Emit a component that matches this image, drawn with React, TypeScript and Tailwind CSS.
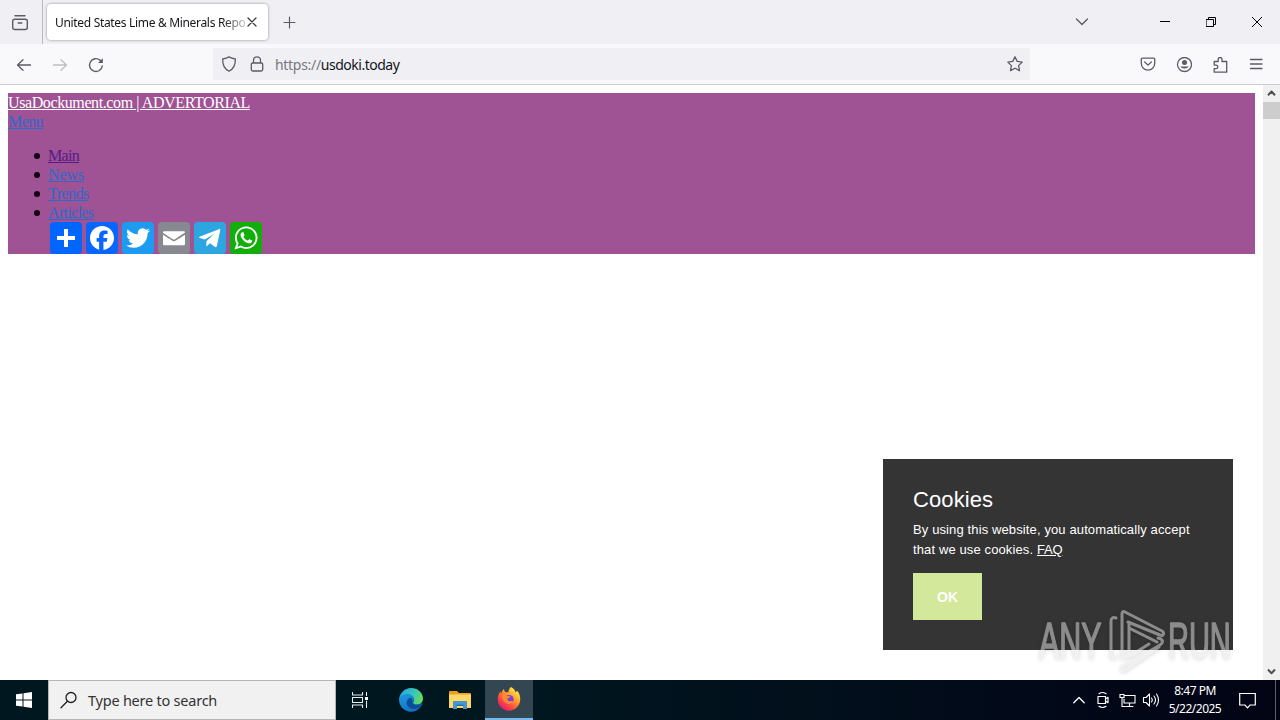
import type { ReactNode } from "react";

interface IconProps { w?: number; h?: number; sw?: number; color?: string; className?: string; children: ReactNode }

function Icon({ w = 16, h = 16, sw = 1.3, color = "#5b5b66", className = "", children }: IconProps) {
  return (
    <svg width={w} height={h} viewBox={`0 0 ${w} ${h}`} fill="none" stroke={color} strokeWidth={sw} strokeLinecap="round" strokeLinejoin="round" className={`block shrink-0 ${className}`}>
      {children}
    </svg>
  );
}

const NAV = [
  { label: "Main", color: "text-[#551a8b]", tracking: "tracking-[-0.7px]" },
  { label: "News", color: "text-[#2a6acb]", tracking: "tracking-[-0.1px]" },
  { label: "Trends", color: "text-[#2a6acb]", tracking: "tracking-[-0.55px]" },
  { label: "Articles", color: "text-[#2a6acb]", tracking: "tracking-[-0.65px]" },
];

const SHARE: { name: string; bg: string; path: string }[] = [
  { name: "share", bg: "bg-[#0166ff]", path: "M14 7h4v18h-4z M7 14h18v4H7z" },
  { name: "facebook", bg: "bg-[#0866ff]", path: "M28 16c0-6.627-5.373-12-12-12S4 9.373 4 16c0 5.628 3.875 10.35 9.101 11.647v-7.98h-2.474V16H13.1v-1.58c0-4.085 1.849-5.978 5.859-5.978.76 0 2.072.15 2.608.298v3.325c-.283-.03-.775-.045-1.386-.045-1.967 0-2.728.745-2.728 2.683V16h3.92l-.673 3.667h-3.247v8.245C23.395 27.195 28 22.135 28 16" },
  { name: "twitter", bg: "bg-[#1d9bf0]", path: "M28 8.557a10 10 0 0 1-2.828.775 4.93 4.93 0 0 0 2.166-2.725 9.7 9.7 0 0 1-3.13 1.194 4.92 4.92 0 0 0-3.593-1.55 4.924 4.924 0 0 0-4.794 6.049c-4.09-.21-7.72-2.17-10.15-5.15a4.94 4.94 0 0 0-.665 2.477c0 1.71.87 3.214 2.19 4.1a5 5 0 0 1-2.23-.616v.06c0 2.39 1.7 4.38 3.952 4.83-.414.115-.85.174-1.297.174q-.476-.001-.928-.086a4.935 4.935 0 0 0 4.6 3.42 9.9 9.9 0 0 1-6.114 2.107q-.597 0-1.175-.068a13.95 13.95 0 0 0 7.55 2.213c9.056 0 14.01-7.507 14.01-14.013q0-.32-.015-.637c.96-.695 1.795-1.56 2.455-2.55z" },
  { name: "email", bg: "bg-[#888990]", path: "M27 21.775v-9.12s-9.433 6.147-11 6.735c-1.547-.56-11-6.736-11-6.736v9.12c0 1.268.268 1.534 1.534 1.534h18.932c1.295 0 1.534-.23 1.534-1.533m-.015-11.267c0-.922-.268-1.32-1.534-1.32H6.534c-1.304 0-1.534.414-1.534 1.337l.015.145s9.293 6.397 10.985 7c1.780-.690 11-7.200 11-7.200z" },
  { name: "telegram", bg: "bg-[#2ca5e0]", path: "M25.515 6.896 6.027 14.410c-1.330.534-1.322 1.276-.243 1.606l5 1.560 9-5.400-7.400 7v5.200l3.600-3.200 5.056 3.734c.930.514 1.602.250 1.834-.863l3.320-15.638c.338-1.363-.520-1.980-1.410-1.577z" },
  { name: "whatsapp", bg: "bg-[#12af0a]", path: "M16.21 4.41C9.973 4.41 4.917 9.465 4.917 15.7c0 2.134.592 4.13 1.62 5.832L4.5 27.59l6.25-2.002a11.24 11.24 0 0 0 5.46 1.404c6.234 0 11.29-5.055 11.29-11.29 0-6.237-5.056-11.292-11.29-11.292m0 20.69c-1.91 0-3.69-.57-5.173-1.553l-3.61 1.156 1.173-3.49a9.35 9.35 0 0 1-1.79-5.512c0-5.18 4.217-9.4 9.4-9.4s9.397 4.22 9.397 9.4c0 5.188-4.214 9.4-9.398 9.4zm5.293-6.832c-.284-.155-1.673-.906-1.934-1.012-.265-.106-.455-.16-.658.12s-.78.91-.954 1.096c-.176.186-.345.203-.628.048-.282-.154-1.2-.494-2.264-1.517-.83-.795-1.373-1.76-1.53-2.055s0-.445.15-.584c.134-.124.3-.326.45-.488.15-.163.203-.28.306-.47.104-.19.06-.36-.005-.506-.066-.147-.59-1.587-.81-2.173-.218-.586-.46-.498-.63-.505-.168-.007-.358-.038-.55-.045-.19-.007-.51.054-.78.332-.277.274-1.05.943-1.1 2.362-.055 1.418.926 2.826 1.064 3.023.137.2 1.874 3.272 4.76 4.537 2.888 1.264 2.9.878 3.43.85.53-.027 1.734-.633 2-1.297s.287-1.24.22-1.363c-.07-.123-.26-.203-.54-.357z" },
];

function TabBar() {
  return (
    <div className="flex h-11 shrink-0 bg-[#efeff4]">
      <div className="flex w-[43px] items-center justify-center border-r border-[#b9b9c0] pr-[2px]">
        <Icon w={18} h={18} sw={1.4} className="mt-px">
          <path d="M4 1.7h10M3.7 5.2h10.6a2 2 0 0 1 2 2v6.3a2 2 0 0 1-2 2H3.7a2 2 0 0 1-2-2V7.2a2 2 0 0 1 2-2zM7.2 9h3.6" />
        </Icon>
      </div>
      <div className="ml-[4px] mt-[4px] flex h-9 w-[221px] items-center rounded-[4px] bg-white pl-[8px] shadow-[0_0_3px_rgba(0,0,0,0.4)]">
        <div className="w-[191px] whitespace-nowrap bg-linear-to-r from-[#15141a] from-88% to-[#15141a]/20 bg-clip-text pt-[2px] font-['Noto_Sans',sans-serif] text-[12px] leading-[18px] tracking-[-0.32px] text-transparent">
          United States Lime &amp; Minerals Repo
        </div>
        <Icon w={10} h={10} sw={1.2} color="#33333b" className="ml-px"><path d="M1 1l8 8M9 1L1 9" /></Icon>
      </div>
      <div className="ml-[9px] flex w-6 items-center justify-center pt-px">
        <Icon w={13} h={13} sw={1.2}><path d="M6.5 1v11M1 6.5h11" /></Icon>
      </div>
      <div className="flex-1" />
      <div className="mr-[42px] flex w-9 items-center justify-center">
        <Icon w={14} h={14}><path d="M1.5 4l5.5 5.5L12.5 4" /></Icon>
      </div>
      <div className="flex w-[46px] items-center justify-center">
        <Icon w={10} h={10} sw={1} color="#000"><path d="M0 4.5h10" strokeLinecap="butt" /></Icon>
      </div>
      <div className="flex w-[46px] items-center justify-center">
        <Icon w={10} h={10} sw={1} color="#000"><path d="M.5 2.5h7v7h-7zM2.5 2.5v-2h7v7h-2" strokeLinejoin="miter" /></Icon>
      </div>
      <div className="flex w-[46px] items-center justify-center">
        <Icon w={10} h={10} sw={1} color="#000"><path d="M.2.2l9.6 9.6M9.8.2L.2 9.8" /></Icon>
      </div>
    </div>
  );
}

function ToolButton({ children }: { children: ReactNode }) {
  return <div className="flex h-10 w-9 items-center justify-center pt-px">{children}</div>;
}

function Toolbar() {
  return (
    <div className="flex h-[41px] shrink-0 border-b border-[#cfc9d2] bg-[#f9f9fb] pl-[6px] pr-[6px]">
      <ToolButton><Icon><path d="M14.5 8h-13M7 2.700L1.500 8l5.500 5.300" /></Icon></ToolButton>
      <ToolButton><Icon color="#bdbdc4"><path d="M1.5 8h13M9 2.700l5.500 5.300-5.500 5.300" /></Icon></ToolButton>
      <ToolButton><Icon sw={1.4}><path d="M14.3 9A6.4 6.4 0 1 1 12 3.1l1.500 1.500" /><path d="M14.8 1.2v4.800h-4.800z" fill="#5b5b66" stroke="none" /></Icon></ToolButton>
      <div className="ml-[99px] mt-[4px] flex h-8 w-[817px] items-center bg-[#f0f0f4] pl-2">
        <Icon><path d="M8 .9c2 1.3 4.3 1.8 6.3 2.1.3 5.7-1.7 9.9-6.3 12.2C3.4 12.9 1.4 8.7 1.7 3 3.7 2.7 6 2.2 8 .9z" /></Icon>
        <Icon className="ml-3"><path d="M3.5 7h9a1.2 1.2 0 0 1 1.2 1.2v5.3a1.5 1.5 0 0 1-1.5 1.5H3.8a1.5 1.5 0 0 1-1.5-1.5V8.2A1.2 1.2 0 0 1 3.5 7zM4.5 7V4.3a3.5 3.5 0 0 1 7 0V7" /></Icon>
        <div className="ml-[10px] whitespace-nowrap pt-[2px] font-['Noto_Sans',sans-serif] text-[14px] leading-5 tracking-[-0.5px] text-[#77777f]">
          <span className="tracking-[-0.3px]">https://</span><span className="text-[#15141a]">usdoki.today</span>
        </div>
        <Icon className="ml-auto mr-[7px]"><path d="M8 .8l2.200 4.600 5 .7-3.600 3.500.900 5L8 12.200l-4.500 2.400.900-5L.8 6.100l5-.7z" /></Icon>
      </div>
      <div className="flex-1" />
      <ToolButton><Icon className="-mt-px"><path d="M2.5 2.2h11a1.2 1.2 0 0 1 1.2 1.2V7.5a6.7 6.700 0 0 1-13.400 0V3.400a1.200 1.200 0 0 1 1.200-1.200zM4.700 6L8 9.100 11.300 6" /></Icon></ToolButton>
      <ToolButton>
        <Icon>
          <circle cx="8.5" cy="7.500" r="7" />
          <circle cx="8.5" cy="5.500" r="2.500" fill="#5b5b66" stroke="none" />
          <path d="M4.200 9.500h8.600a4.600 3.200 0 0 1-8.600 0z" fill="#5b5b66" stroke="none" />
        </Icon>
      </ToolButton>
      <ToolButton><Icon><path d="M2.200 4.500h4V2.400a1.900 1.900 0 0 1 3.800 0v2.100h4.700v10.700H2.200v-3.500H4a1.800 1.800 0 0 0 0-3.600H2.200z" /></Icon></ToolButton>
      <ToolButton><Icon className="-mt-[2px]"><path d="M2.500 3.500h11.500M2.500 8h11.500M2.500 12.500h11.500" /></Icon></ToolButton>
    </div>
  );
}

function SiteHeader() {
  return (
    <div className="h-[161px] bg-[#9f5294] font-['Liberation_Serif',serif] text-[16px]">
      <a className="block h-[18px] w-fit whitespace-nowrap leading-[19px] tracking-[-0.4px] text-white underline">UsaDockument.com | ADVERTORIAL</a>
      <a className="block h-[19px] w-fit pt-px leading-[19px] tracking-[-0.6px] text-[#2a6acb] underline">Menu</a>
      <ul className="mt-[16px] list-none pl-[26px]">
        {NAV.map(n => (
          <li key={n.label} className="flex h-[19px] items-center">
            <span className="mt-px h-[6px] w-[6px] rounded-full bg-[#110011]" />
            <a className={`ml-2 leading-[19px] underline ${n.color} ${n.tracking}`}>{n.label}</a>
          </li>
        ))}
      </ul>
      <div className="flex gap-1 pl-[42px]">
        {SHARE.map(s => (
          <a key={s.name} className={`h-8 w-8 rounded-[4px] ${s.bg}`}>
            <svg width="32" height="32" viewBox="0 0 32 32" fill="#fff"><path d={s.path} /></svg>
          </a>
        ))}
      </div>
    </div>
  );
}

function CookieBox() {
  return (
    <div className="absolute left-[883px] top-[374px] h-[191px] w-[350px] bg-[#343434] px-[30px] pt-[27px] font-['Liberation_Sans',sans-serif] text-white">
      <h2 className="text-[22px] leading-[28px] tracking-[0.1px]">Cookies</h2>
      <p className="mt-[6px] whitespace-nowrap text-[13px] leading-5 tracking-[0.12px]">
        By using this website, you automatically accept<br />
        that we use cookies. <a className="tracking-[-0.2px] underline">FAQ</a>
      </p>
      <button className="mt-[13px] h-[47px] w-[69px] bg-[#d3e89a] pt-[2px] text-[14px] font-bold">OK</button>
    </div>
  );
}

function Watermark() {
  return (
    <div className="absolute left-[1038px] top-[522px] opacity-50 drop-shadow-[0_1px_2px_rgba(0,0,0,0.3)]">
      <svg width="200" height="66" viewBox="0 0 200 66" fill="none" stroke="#e4e4e4" strokeWidth="3" strokeLinejoin="round" strokeLinecap="round" className="overflow-visible font-['Liberation_Sans',sans-serif]">
        <g fill="#e4e4e4" strokeWidth="1.500" fontSize="50">
          <text transform="translate(1 51) scale(0.61 1)">ANY</text>
          <text transform="translate(130 51) scale(0.580 1)">RUN</text>
        </g>
        <path d="M78 11c-3-1-5 0-5 3v34c0 3 2 3 5 2M84 49V7c0-2 1-3 3-2l37 19c3 2 1 6-2 4L90 15" />
        <path d="M84 51l12-5M91 17v28M91 21l28 14M92 49l19-12M120 31c5 1 6 4 2 7L86 59c-4 2-3 6 1 4l34-23" />
      </svg>
    </div>
  );
}

function Scrollbar() {
  return (
    <div className="ml-auto flex w-[17px] shrink-0 flex-col items-center bg-[#f0f0f0]">
      <div className="flex h-[17px] items-center">
        <Icon w={9} h={7} sw={2} color="#505050"><path d="M1 5.2l3.5-3.7L8 5.2" strokeLinecap="butt" /></Icon>
      </div>
      <div className="h-[17px] w-full bg-[#cdcdcd]" />
      <div className="mt-auto flex h-[17px] items-center">
        <Icon w={9} h={7} sw={2} color="#505050"><path d="M1 1.5l3.5 3.7L8 1.5" strokeLinecap="butt" /></Icon>
      </div>
    </div>
  );
}

function EdgeLogo() {
  return (
    <svg width="24" height="24" viewBox="0 0 24 24">
      <defs>
        <linearGradient id="edgeTop" x1="0" y1="0.3" x2="1" y2="0.6"><stop offset="0" stopColor="#28a8e0" /><stop offset="0.5" stopColor="#35c1c5" /><stop offset="1" stopColor="#66dd58" /></linearGradient>
        <linearGradient id="edgeSide" x1="0" y1="0" x2="0.5" y2="1"><stop offset="0" stopColor="#1b9be0" /><stop offset="1" stopColor="#1272c4" /></linearGradient>
      </defs>
      <path d="M0 12C.5 5 5.500 0 12 0c7 0 12 5 12 10.500 0 4-3 6.200-6.500 6.200-3 0-4.300-1.300-3.200-2.700 2-3-.3-6.500-4.300-6.500C5 7.500 1 9.500 0 12z" fill="url(#edgeTop)" />
      <path d="M0 12c.5-4 4.500-6 8.500-6 4.500 0 7.200 3.500 6.300 6.500-.500 2-1.300 2 .2 3.300 2 1.500 5 1 7.800-.500.600 0 .500.700.200 1.300A12 12 0 0 1 0 12z" fill="url(#edgeSide)" />
      <path d="M12 9.500C8.500 10.500 7 13.500 8 16.500c1.300 4 6 5.500 11 3.800 1.600-.8 3-2 4-3.700.300-.700 0-1.300-.600-.900-3 1.600-6.500 1.600-8.200 0C12.700 14.300 14.800 12.500 12 9.500z" fill="#0c4f98" />
    </svg>
  );
}

function FolderLogo() {
  return (
    <svg width="22" height="20" viewBox="0 0 22 20">
      <path d="M0 2a1 1 0 0 1 1-1h7l2 2h11a1 1 0 0 1 1 1v14H0z" fill="#e9a21f" />
      <path d="M0 4.5h22V18H0z" fill="#ffd766" />
      <path d="M4 19v-7a1 1 0 0 1 1-1h12a1 1 0 0 1 1 1v7h-4v-3.500H8V19z" fill="#4497d2" />
      <path d="M7.500 14.500h7v1.500h-7z" fill="#2872ad" />
    </svg>
  );
}

function FirefoxLogo() {
  return (
    <svg width="24" height="24" viewBox="0 0 24 24">
      <defs>
        <linearGradient id="foxBody" x1="0.85" y1="0.1" x2="0.2" y2="0.95"><stop offset="0" stopColor="#fff04a" /><stop offset="0.35" stopColor="#ffa22a" /><stop offset="0.7" stopColor="#ff4a3d" /><stop offset="1" stopColor="#e3177f" /></linearGradient>
      </defs>
      <path d="M14 0c3 1.500 4.200 3.500 4.500 5.500 1-.5 1.200-1.200 1.200-2C22 5.500 23.500 9 23.200 13 22.700 19 18 23.700 12 23.700S.8 19 .8 12.500c0-3.500 1-6 2.500-8 .2 1 .5 1.500 1 2C5 4 6 2.500 7 2c0 1.500.7 2.800 2 3.200h2.500C11.500 3 12.500 1 14 0z" fill="url(#foxBody)" />
      <circle cx="12" cy="12.5" r="4.600" fill="#7a3fe0" />
      <path d="M5 8.500c2-1.200 4-.8 5.500.5l3 .2c0 1.500-2.500 1.600-3 2.300-.3 2 1 3 3 2.700 1.500-.3 2.500-.3 3 .3-1.200 2-3.500 3-6 2.300C7 15.800 5.300 13 5 8.500z" fill="#ff8a2e" />
    </svg>
  );
}

function Taskbar() {
  return (
    <div className="flex h-10 shrink-0 bg-linear-to-r from-[#001720] from-40% to-[#020414] text-white">
      <div className="flex w-12 items-center justify-center">
        <svg width="16" height="16" viewBox="0 0 16 16" fill="#fff"><path d="M0 2.3l6.5-.9v6.1H0zM7.500 1.200L16 0v7.500H7.500zM0 8.500h6.500v6.100L0 13.700zM7.500 8.500H16V16l-8.500-1.200z" /></svg>
      </div>
      <div className="flex w-72 items-center border border-[#b5b5b5] bg-[#f1f1f1] pl-[11px]">
        <Icon w={18} h={18} sw={1.3} color="#222"><circle cx="11" cy="6.5" r="5" /><path d="M7.4 10.3L1 16.8" /></Icon>
        <span className="ml-[10px] pt-[2px] font-['Noto_Sans',sans-serif] text-[14.5px] tracking-[-0.23px] text-[#333]">Type here to search</span>
      </div>
      <div className="flex w-12 items-center justify-center">
        <Icon w={16} h={16} sw={1.1} color="#e8eef0"><path d="M.5.5v2.500h10V.5M.5 5.500h10v5H.5zM.5 15.500V13h10v2.500M14.500.5v3M14.500 9v6.500" strokeLinejoin="miter" /><path d="M13 5h3v3h-3z" fill="#fff" stroke="none" /></Icon>
      </div>
      <div className="flex w-[54px] items-center justify-center"><EdgeLogo /></div>
      <div className="flex w-[47px] items-center justify-center pr-[3px]"><FolderLogo /></div>
      <div className="flex w-12 items-center justify-center border-b-2 border-[#76b9ed] bg-[#334651]"><FirefoxLogo /></div>
      <div className="flex-1" />
      <div className="flex w-6 items-center justify-center"><Icon w={12} h={8} sw={1.3} color="#fff"><path d="M.8 6.800L6 1.500l5.200 5.300" /></Icon></div>
      <div className="flex w-6 items-center justify-center">
        <Icon w={14} h={18} sw={1.2} color="#fff"><path d="M2 5.500h7.500v7H2zM9.500 8l2.500-1.700v5.400L9.500 10M3 2.700q3.500-2.400 7 0M3 15.300q3.500 2.400 7 0" /></Icon>
      </div>
      <div className="flex w-6 items-center justify-center">
        <Icon w={17} h={16} sw={1.1} color="#fff"><path d="M6 3.500h10v7.500H5V7M10.500 11v3M7 14.500h7M1 2.500h4v3H1zM3 5.500v9h3" strokeLinejoin="miter" /></Icon>
      </div>
      <div className="flex w-6 items-center justify-center">
        <Icon w={18} h={16} sw={1.1} color="#fff"><path d="M1.500 5.500H4L7.500 2v12L4 10.500H1.500zM9.500 6q1.500 2 0 4M12 4q3 4 0 8M14.500 2q4 6 0 12" /></Icon>
      </div>
      <div className="flex w-16 flex-col items-center pt-[2px] font-['Noto_Sans',sans-serif] text-[12px] leading-[18px] tracking-[-0.5px]">
        <span>8:47 PM</span>
        <span>5/22/2025</span>
      </div>
      <div className="flex w-[49px] items-center justify-center border-r border-[#57606c] pr-2">
        <Icon w={17} h={17} sw={1.2} color="#fff"><path d="M.7 1.500h15.600v11.500h-5.300l-2.500 2.800L6 13H.7z" strokeLinejoin="miter" /></Icon>
      </div>
      <div className="w-1" />
    </div>
  );
}

export default function App() {
  return (
    <div className="flex h-[720px] w-[1280px] flex-col overflow-hidden bg-white">
      <TabBar />
      <Toolbar />
      <div className="relative flex min-h-0 flex-1">
        <div className="w-[1263px] px-2 pt-2">
          <SiteHeader />
        </div>
        <Scrollbar />
        <CookieBox />
        <Watermark />
      </div>
      <Taskbar />
    </div>
  );
}
